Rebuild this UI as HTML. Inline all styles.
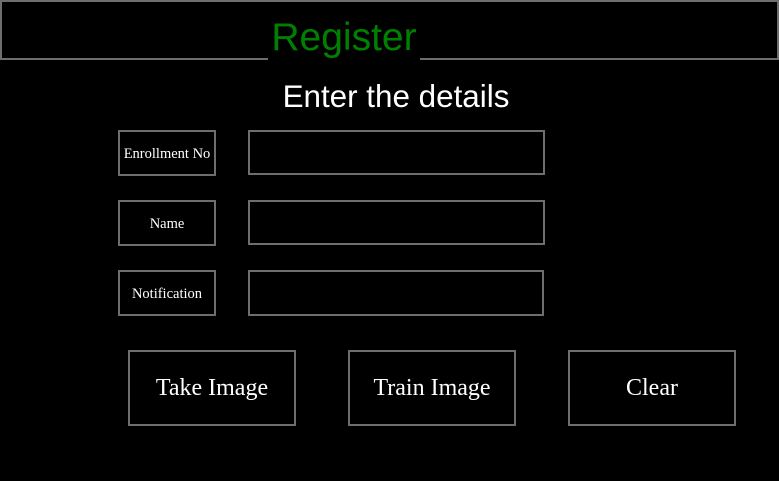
<!DOCTYPE html>
<html><head><style>
body{margin:0;width:779px;height:481px;background:#000;position:relative;overflow:hidden}
div{position:absolute;box-sizing:border-box}
.b{border:2px solid #6e6e6e}
.l{font-family:"Liberation Serif",serif;color:#fff;font-size:14.5px;display:flex;align-items:center;justify-content:center;padding-top:3px}
.btn{font-family:"Liberation Serif",serif;color:#fff;font-size:24px;display:flex;align-items:center;justify-content:center}
</style></head><body>
<div style="left:0;top:0;width:779px;height:2px;background:#6e6e6e"></div>
<div style="left:0;top:0;width:2px;height:60px;background:#6e6e6e"></div>
<div style="left:777px;top:0;width:2px;height:60px;background:#6e6e6e"></div>
<div style="left:0;top:58px;width:268px;height:2px;background:#6e6e6e"></div>
<div style="left:420px;top:58px;width:359px;height:2px;background:#6e6e6e"></div>
<div style="left:200px;top:15px;width:288px;text-align:center;font-family:'Liberation Sans',sans-serif;font-size:39px;color:#008000;line-height:46px">Register</div>
<div style="left:200px;top:78px;width:392px;text-align:center;font-family:'Liberation Sans',sans-serif;font-size:31.4px;color:#fff;line-height:38px">Enter the details</div>
<div class="b l" style="left:118px;top:130px;width:98px;height:46px">Enrollment No</div>
<div class="b" style="left:248px;top:130px;width:297px;height:45px"></div>
<div class="b l" style="left:118px;top:200px;width:98px;height:46px">Name</div>
<div class="b" style="left:248px;top:200px;width:297px;height:45px"></div>
<div class="b l" style="left:118px;top:270px;width:98px;height:46px">Notification</div>
<div class="b" style="left:248px;top:270px;width:296px;height:46px"></div>
<div class="b btn" style="left:128px;top:350px;width:168px;height:76px">Take Image</div>
<div class="b btn" style="left:348px;top:350px;width:168px;height:76px">Train Image</div>
<div class="b btn" style="left:568px;top:350px;width:168px;height:76px">Clear</div>
</body></html>
